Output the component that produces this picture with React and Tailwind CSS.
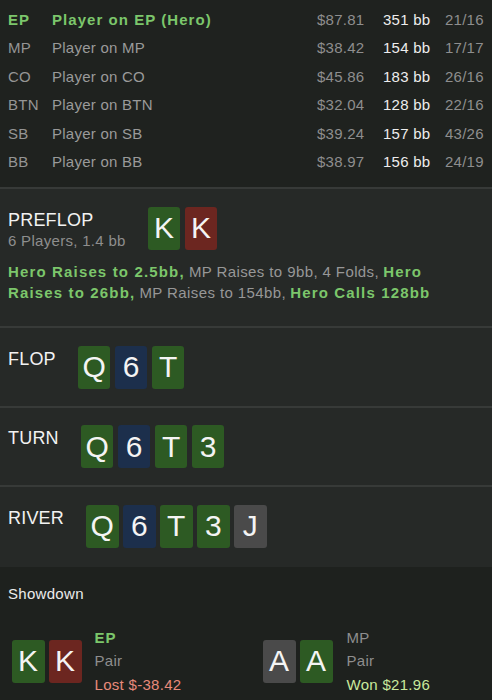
import React from 'react';

const players = [
  { pos: 'EP', name: 'Player on EP (Hero)', usd: '$87.81', bb: '351 bb', ratio: '21/16', hero: true },
  { pos: 'MP', name: 'Player on MP', usd: '$38.42', bb: '154 bb', ratio: '17/17' },
  { pos: 'CO', name: 'Player on CO', usd: '$45.86', bb: '183 bb', ratio: '26/16' },
  { pos: 'BTN', name: 'Player on BTN', usd: '$32.04', bb: '128 bb', ratio: '22/16' },
  { pos: 'SB', name: 'Player on SB', usd: '$39.24', bb: '157 bb', ratio: '43/26' },
  { pos: 'BB', name: 'Player on BB', usd: '$38.97', bb: '156 bb', ratio: '24/19' },
];

const suitBg = {
  c: 'bg-[#2d5a23]',
  h: 'bg-[#6c2620]',
  d: 'bg-[#1c2f4c]',
  s: 'bg-[#4a4a4a]',
};

const Card = ({ rank, suit }) => (
  <div
    className={`w-[32.5px] h-[43px] rounded-[3px] flex items-center justify-center text-[30px] leading-none text-[#f4f4f4] ${suitBg[suit]}`}
  >
    {rank}
  </div>
);

const Cards = ({ cards }) => (
  <div className="flex gap-[4.5px] shrink-0">
    {cards.map((c, i) => (
      <Card key={i} rank={c[0]} suit={c[1]} />
    ))}
  </div>
);

const Street = ({ label, cards, last }) => (
  <div className={`flex items-start gap-[22px] px-2 pt-[17.5px] ${last ? 'pb-[19px]' : 'pb-[17px] border-b-2 border-[#373a38]'} bg-[#262927]`}>
    <div className="pt-[2px] text-[18px] leading-[22px] text-[#f2f2f2] tracking-[0.2px]">{label}</div>
    <Cards cards={cards} />
  </div>
);

const Hero = ({ children }) => (
  <span className="font-bold text-[#7cc66b] tracking-[1.15px]">{children}</span>
);

const Gray = ({ children }) => <span className="text-[#979797] tracking-[0.4px]">{children}</span>;

export default function App() {
  return (
    <div className="w-[492px] min-h-[700px] bg-[#1e211e] text-[15px]" style={{ fontFamily: '"Liberation Sans", Arial, sans-serif' }}>
      {/* Players */}
      <div className="px-2 pt-[6px] pb-[10.5px] border-b-2 border-[#373a38] bg-[#1f221f]">
        {players.map((p) => (
          <div key={p.pos} className="flex leading-[28.4px] tracking-[0.25px] whitespace-nowrap">
            <div className={`w-[44px] shrink-0 ${p.hero ? 'font-bold text-[#7cc66b] tracking-[1px]' : 'text-[#959595]'}`}>{p.pos}</div>
            <div className={`flex-1 ${p.hero ? 'font-bold text-[#7cc66b] tracking-[1.05px]' : 'text-[#9a9a9a]'}`}>{p.name}</div>
            <div className="w-[66px] shrink-0 text-[#8e8e8e]">{p.usd}</div>
            <div className="w-[47px] shrink-0 text-right text-[#ededed]">{p.bb}</div>
            <div className="w-[39px] shrink-0 ml-[15px] text-[#8e8e8e]">{p.ratio}</div>
          </div>
        ))}
      </div>

      {/* Preflop */}
      <div className="px-2 pt-[18px] pb-[23px] border-b-2 border-[#373a38] bg-[#262927]">
        <div className="flex items-start gap-[22px]">
          <div className="pt-[2.5px]">
            <div className="text-[18px] leading-[22px] text-[#f2f2f2] tracking-[0.2px]">PREFLOP</div>
            <div className="text-[15px] leading-[20px] text-[#8e8e8e] tracking-[0.3px]">6 Players, 1.4 bb</div>
          </div>
          <Cards cards={['Kc', 'Kh']} />
        </div>
        <p className="mt-[10px] leading-[21px] pr-[40px]">
          <Hero>Hero Raises to 2.5bb,</Hero> <Gray>MP Raises to 9bb, 4 Folds,</Gray>{' '}
          <Hero>Hero Raises to 26bb,</Hero> <Gray>MP Raises to 154bb,</Gray> <Hero>Hero Calls 128bb</Hero>
        </p>
      </div>

      <Street label="FLOP" cards={['Qc', '6d', 'Tc']} />
      <Street label="TURN" cards={['Qc', '6d', 'Tc', '3c']} />
      <Street label="RIVER" cards={['Qc', '6d', 'Tc', '3c', 'Js']} last />

      {/* Showdown */}
      <div className="pt-[17px] pb-4 bg-[#1e211e]">
        <div className="px-2 leading-[20px] text-[#ececec] tracking-[0.3px]">Showdown</div>
        <div className="grid grid-cols-2 mt-[22px] px-3 tracking-[0.3px]">
          <div className="flex items-center gap-[13px]">
            <Cards cards={['Kc', 'Kh']} />
            <div className="leading-[23.5px]">
              <div className="font-bold text-[#7cc66b] tracking-[1px]">EP</div>
              <div className="text-[#8e8e8e]">Pair</div>
              <div className="text-[#e88a7b]">Lost $-38.42</div>
            </div>
          </div>
          <div className="flex items-center gap-[14px] pl-[17px]">
            <Cards cards={['As', 'Ac']} />
            <div className="leading-[23.5px]">
              <div className="text-[#8e8e8e]">MP</div>
              <div className="text-[#8e8e8e]">Pair</div>
              <div className="text-[#c9e89c]">Won $21.96</div>
            </div>
          </div>
        </div>
      </div>
    </div>
  );
}
